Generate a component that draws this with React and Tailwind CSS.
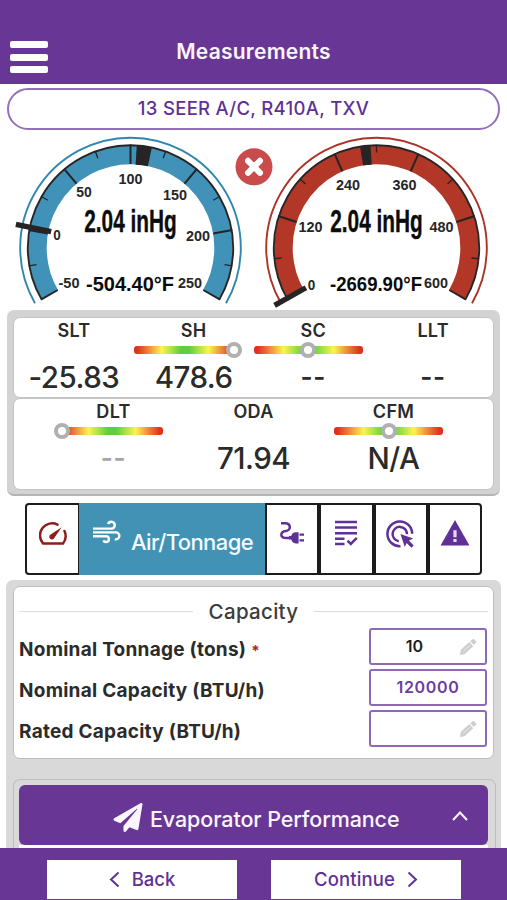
import { FaPaperPlane } from "react-icons/fa";

const rad = (deg) => (deg * Math.PI) / 180;
const CX = 117.5;
const CY = 118;

const point = (r, deg) => [CX + r * Math.cos(rad(deg)), CY - r * Math.sin(rad(deg))];

// arc drawn clockwise, angles are counter-clockwise from 3 o'clock
const arc = (r, from, to) => {
  const [x1, y1] = point(r, from);
  const [x2, y2] = point(r, to);
  return `M${x1} ${y1}A${r} ${r} 0 ${from - to > 180 ? 1 : 0} 1 ${x2} ${y2}`;
};

const Tick = ({ r1, r2, deg, width }) => {
  const [x1, y1] = point(r1, deg);
  const [x2, y2] = point(r2, deg);
  return <line x1={x1} y1={y1} x2={x2} y2={y2} stroke="#262424" strokeWidth={width} />;
};

const Gauge = ({ color, ring, majors, minors, labels, needle, block, temp }) => (
  <svg width="234" height="180" viewBox="0 0 234 180" className="shrink-0 overflow-visible">
    <path d={arc(110.3, 210, -30)} fill="none" stroke={ring} strokeWidth="1.9" />
    <path d={arc(93, 210, -30)} fill="none" stroke={color} strokeWidth="18.4" />
    <path d={arc(102.7, 210, -30)} fill="none" stroke="#262424" strokeWidth="1.9" />
    <path d={arc(93, block[0], block[1])} fill="none" stroke="#262424" strokeWidth="19" />
    {majors.map((deg) => (
      <Tick key={deg} r1={84} r2={103.4} deg={deg} width={2} />
    ))}
    {minors.map((deg) => (
      <Tick key={deg} r1={95.5} r2={103} deg={deg} width={1.3} />
    ))}
    <Tick r1={81} r2={117} deg={needle} width={5.4} />
    <g fontFamily="'Liberation Sans', Arial, sans-serif" fontWeight="700" textAnchor="middle">
      {labels.map(([text, x, y, w]) => (
        <text key={text} x={x} y={y} fontSize="14.5" fill="#262626" textLength={w} lengthAdjust="spacingAndGlyphs">
          {text}
        </text>
      ))}
      <text
        x={CX}
        y="101.5"
        fontSize="32"
        fill="#0c0c0c"
        stroke="#0c0c0c"
        strokeWidth="0.4"
        textLength="92.5"
        lengthAdjust="spacingAndGlyphs"
      >
        2.04 inHg
      </text>
      <text x={temp.x} y="161" fontSize="20" fill="#0c0c0c" textLength={temp.w} lengthAdjust="spacingAndGlyphs">
        {temp.text}
      </text>
    </g>
  </svg>
);

const gauges = {
  low: {
    color: "#4092b8",
    ring: "#3087ad",
    majors: [210, 170, 130, 90, 50, 10, -30],
    minors: [190, 150, 110, 70, 30, -10],
    labels: [
      ["-50", 56, 158, 21],
      ["0", 44, 109.5, 7.5],
      ["50", 71, 67, 15.5],
      ["100", 117.5, 53.5, 24],
      ["150", 162, 69.5, 24],
      ["200", 185, 111, 24],
      ["250", 177, 157.5, 24],
    ],
    needle: 168.4,
    block: [86.5, 78],
    temp: { text: "-504.40°F", x: 117, w: 88 },
  },
  high: {
    color: "#b23727",
    ring: "#ad3327",
    majors: [210, 162, 114, 66, 18, -30],
    minors: [186, 138, 90, 42, -6],
    labels: [
      ["0", 52.5, 160, 7.5],
      ["120", 51.5, 101.5, 24],
      ["240", 89, 59.5, 24],
      ["360", 145.5, 59.5, 24],
      ["480", 182.5, 101.5, 24],
      ["600", 177, 157.5, 24],
    ],
    needle: 209.4,
    block: [99.2, 93.3],
    temp: { text: "-2669.90°F", x: 117, w: 92 },
  },
};

// the bar stops under the knob when the knob sits at either end
const Slider = ({ position }) => (
  <div className="relative -left-[5px] mx-auto flex h-2 w-[109px]">
    {position < 10 && <span className="w-[7px]" />}
    <span className="h-2 flex-1 rounded-[3px] bg-[linear-gradient(to_right,#e0301c_3%,#ee7d3c_13%,#fbf44f_27%,#5bcf45_46%,#5bcf45_54%,#fbf44f_73%,#ee7d3c_87%,#e0301c_97%)]" />
    {position > 90 && <span className="w-[7px]" />}
    <span
      className="absolute -top-1 h-4 w-4 -translate-x-1/2 rounded-full border-4 border-[#b0b0b0] bg-white"
      style={{ left: `${position}%` }}
    />
  </div>
);

const Reading = ({ label, value, slider, muted, width }) => (
  <div className={width}>
    <p className="text-center text-[18px] font-semibold leading-[26px] tracking-[0.3px]">{label}</p>
    <div className="mt-[1.5px] h-2">{slider !== undefined && <Slider position={slider} />}</div>
    <p
      className={`mt-[5px] text-center leading-[36px] ${
        value === "--" ? "text-[26px] font-semibold tracking-[0.7px]" : "text-[29.5px] font-medium tracking-[-0.5px]"
      } ${muted ? "text-[#a5a5a5]" : ""}`}
    >
      {value}
    </p>
  </div>
);

const GaugeIcon = () => (
  <svg width="28" height="24" viewBox="0 0 28 24" fill="none" stroke="#8f1d1d" strokeWidth="2.5" strokeLinecap="round">
    <path d="M18.5 2.6A12.1 12.1 0 0 0 4 21.4h20A12.1 12.1 0 0 0 25.5 9" />
    <path d="M22.7 5.2 11.6 12.4a2.7 2.7 0 1 0 3.7 3.7z" fill="#8f1d1d" stroke="none" />
  </svg>
);

const WindIcon = () => (
  <svg width="28" height="24" viewBox="0 0 28 24" fill="none" stroke="white" strokeWidth="2.4">
    <path d="M0 8.6h18.5a3.4 3.4 0 1 0-3.4-4.4" />
    <path d="M0 12.4h22.4a3.5 3.5 0 1 1-.6 6.8" />
    <path d="M0 16.2h13a2.9 2.9 0 1 1-2.6 4.2" />
  </svg>
);

const PlugIcon = () => (
  <svg width="26" height="24" viewBox="0 0 26 24">
    <path d="M2 3.2h4.2c6 0 6 7.3.8 7.7-6.7.6-6.2 7.6 1.2 7.2h3" fill="none" stroke="#5f3196" strokeWidth="2.5" />
    <path d="M10 16h2.2c.6-2.4 2.2-3.8 4.6-3.8h2.8v11.2h-2.8c-2.4 0-4-1.4-4.6-3.8H10z" fill="#5f3196" />
    <path d="M20.5 14.6H25M20.5 20.4H25" stroke="#5f3196" strokeWidth="2.3" />
  </svg>
);

const ListIcon = () => (
  <svg width="24" height="26" viewBox="0 0 24 26" fill="none" stroke="#5f3196" strokeWidth="2.5">
    <path d="M1 2h22M1 7.6h22M1 13.2h22M1 18.8h9.5M1 24h9.5" />
    <path d="m13.5 20.6 3.3 3.3 6-6" />
  </svg>
);

const TargetIcon = () => (
  <svg width="28" height="28" viewBox="0 0 28 28" fill="none" stroke="#5f3196" strokeWidth="2.5">
    <path d="M14.5 26.2A12.4 12.4 0 1 1 26.2 13.8" />
    <path d="M12.8 21.2a7.2 7.2 0 1 1 8.2-7" />
    <path d="m14.4 14 12.8 4.6-4.2 2 4.7 4.8-2.3 2.3-4.8-4.7-1.8 4z" fill="#5f3196" stroke="none" />
  </svg>
);

const WarningIcon = () => (
  <svg width="30" height="26" viewBox="0 0 30 26">
    <path d="M15 0 29.5 25.5H.5z" fill="#5f3196" />
    <path d="M13.4 10.2h3.2v7h-3.2zM13.4 19h3.2v3h-3.2z" fill="#e9d9f5" />
  </svg>
);

const PencilIcon = () => (
  <svg width="18" height="18" viewBox="0 0 18 18" fill="#cfcfcf">
    <path d="M1 17 1.8 11.8 10.4 4 14.2 8.2 5.6 16.2z" />
    <path d="m11.3 3.2 2.3-1.9c.6-.5 1.1-.5 1.6 0l1.8 2c.5.6.5 1 0 1.5l-2.1 2.2z" />
    <path d="m4.4 13.2 7-6.4" stroke="#f0f0f0" strokeWidth=".8" />
  </svg>
);

const tabs = [<PlugIcon />, <ListIcon />, <TargetIcon />, <WarningIcon />];

const Field = ({ label, required, value, valueClass, editable }) => (
  <div className="flex h-[41px] items-start justify-between pl-[5px] pr-[6px]">
    <p className="pt-[9px] text-[19px] font-[650] leading-[26px] tracking-[0.25px]">
      {label}
      {required && <span className="ml-[5px] text-[15px] text-[#b51f25]">*</span>}
    </p>
    <div className="relative h-[37px] w-[118px] rounded-[3px] border-2 border-[#8f68b8] text-center">
      <span className={`text-[16px] font-semibold leading-[33px] ${valueClass}`}>{value}</span>
      {editable && (
        <span className="absolute right-[8px] top-[8px]">
          <PencilIcon />
        </span>
      )}
    </div>
  </div>
);

const App = () => {
  return (
    <div className="flex h-[900px] w-[507px] flex-col overflow-hidden bg-white font-['Inter',sans-serif] text-[#2b2b2b]">
      {/* Header */}
      <header className="relative h-[84px] shrink-0 bg-[#683796] pt-[38px]">
        <div className="absolute left-[10px] top-[41px] flex flex-col gap-[5.5px]">
          <span className="h-[7px] w-[38px] rounded-[2px] bg-white" />
          <span className="h-[7px] w-[38px] rounded-[2px] bg-white" />
          <span className="h-[7px] w-[38px] rounded-[2px] bg-white" />
        </div>
        <h1 className="text-center text-[21px] font-semibold leading-[28px] tracking-[0.25px] text-[#fbf5ff]">
          Measurements
        </h1>
      </header>

      <div className="mx-[7px] mt-[4px] flex h-[42px] shrink-0 items-center justify-center rounded-[21px] border-2 border-[#9470ba] text-[18.5px] font-medium tracking-[0.3px] text-[#5f3196]">
        13 SEER A/C, R410A, TXV
      </div>

      {/* Pressure gauges */}
      <section className="relative flex h-[180px] shrink-0 gap-[12px] pl-[13px]">
        <Gauge {...gauges.low} />
        <Gauge {...gauges.high} />
        <button className="absolute left-[234.5px] top-[18px]">
          <svg width="38" height="38" viewBox="0 0 38 38">
            <circle cx="19" cy="18.8" r="18.5" fill="#c94b4b" />
            <path d="m13 12.8 12 12m0-12-12 12" stroke="white" strokeWidth="6" strokeLinecap="round" />
          </svg>
        </button>
      </section>

      {/* Readings */}
      <section className="mx-[7px] h-[186px] shrink-0 rounded-[7px] border-b-2 border-[#b5b5b5] bg-[#d3d3d3] px-[6px] pt-[7px]">
        <div className="flex h-[81px] rounded-[7px] border border-[#c4c4c4] bg-white">
          <Reading label="SLT" value="-25.83" width="w-[120px]" />
          <Reading label="SH" value="478.6" slider={92} width="w-[120px]" />
          <Reading label="SC" value="--" slider={50} width="w-[120px]" />
          <Reading label="LLT" value="--" width="w-[120px]" />
        </div>
        <div className="flex h-[92px] justify-center rounded-[7px] border border-[#c4c4c4] bg-white">
          <Reading label="DLT" value="--" slider={7} muted width="w-[140px]" />
          <Reading label="ODA" value="71.94" width="w-[140px]" />
          <Reading label="CFM" value="N/A" slider={50} width="w-[140px]" />
        </div>
      </section>

      {/* Tabs */}
      <nav className="ml-[25px] mt-[7px] flex h-[72px] w-[457px] shrink-0 overflow-hidden">
        <div className="flex w-[54px] justify-center rounded-l-[4px] border-2 border-r border-[#1c1c1c] pt-[17px]">
          <GaugeIcon />
        </div>
        <div className="flex w-[186px] bg-[#4292b6] pl-[14px] pt-[17px]">
          <WindIcon />
          <span className="ml-[10px] mt-[8px] whitespace-nowrap text-[22px] font-medium leading-[28px] tracking-[-0.6px] text-[#f2fbff]">
            Air/Tonnage
          </span>
        </div>
        {tabs.map((icon, idx) => (
          <div
            key={idx}
            className="flex w-[54.25px] justify-center border-2 border-[#1c1c1c] pr-px pt-[15px] last:rounded-r-[4px] last:pr-0"
          >
            {icon}
          </div>
        ))}
      </nav>

      {/* Capacity */}
      <section className="mx-[6px] mt-[5px] h-[268px] shrink-0 rounded-t-[7px] bg-[#d9d9d9] px-[7px] pt-[6px]">
        <div className="h-[173px] w-[481px] rounded-[7px] border border-[#bebebe] bg-white">
          <div className="flex h-[41px] items-center gap-[16px] px-[5px] pt-[7px]">
            <span className="h-px flex-1 bg-[#dcdcdc]" />
            <h2 className="pt-px text-[20.5px] font-medium leading-[28px] tracking-[0.3px] text-[#3c3c3c]">Capacity</h2>
            <span className="h-px flex-1 bg-[#dcdcdc]" />
          </div>
          <Field label="Nominal Tonnage (tons)" required value="10" valueClass="mr-[27px] text-[#1c1c1c]" editable />
          <Field label="Nominal Capacity (BTU/h)" value="120000" valueClass="tracking-[0.65px] text-[#6b3da0]" />
          <Field label="Rated Capacity (BTU/h)" value="" valueClass="" editable />
        </div>
        <div className="mt-[20px] h-[69px] w-[483px] rounded-t-[7px] border border-b-0 border-[#bdbdbd] px-[5px] pt-[5px]">
          <div className="relative flex h-[60px] w-[469px] rounded-[6px] bg-[#683796] pl-[94px] pt-[18px] text-[#fbf5ff]">
            <FaPaperPlane className="h-[29px] w-[30px]" />
            <span className="ml-[7px] mt-[2px] text-[21.5px] font-medium leading-[28px] tracking-[-0.1px]">
              Evaporator Performance
            </span>
            <svg width="18" height="12" viewBox="0 0 18 12" fill="none" className="absolute right-[19px] top-[25px]">
              <path d="m2 10 7-7.4 7 7.4" stroke="currentColor" strokeWidth="2.1" />
            </svg>
          </div>
          <div className="h-[3px] w-[469px] bg-white" />
        </div>
      </section>

      {/* Footer */}
      <footer className="flex h-[52px] shrink-0 gap-[34px] bg-[#683796] pl-[47px] pt-[12px] text-[18.5px] font-medium text-[#5f3196]">
        <button className="flex h-[39px] w-[190px] items-center justify-center gap-[12px] bg-white">
          <svg width="11" height="17" viewBox="0 0 11 17" fill="none" stroke="currentColor" strokeWidth="2">
            <path d="M9.5 1.5 2 8.5l7.5 7" />
          </svg>
          Back
        </button>
        <button className="flex h-[39px] w-[190px] items-center justify-center gap-[12px] bg-white">
          <span className="tracking-[0.15px]">Continue</span>
          <svg width="11" height="17" viewBox="0 0 11 17" fill="none" stroke="currentColor" strokeWidth="2">
            <path d="m1.5 1.5 7.5 7-7.5 7" />
          </svg>
        </button>
      </footer>
    </div>
  );
};

export default App;
